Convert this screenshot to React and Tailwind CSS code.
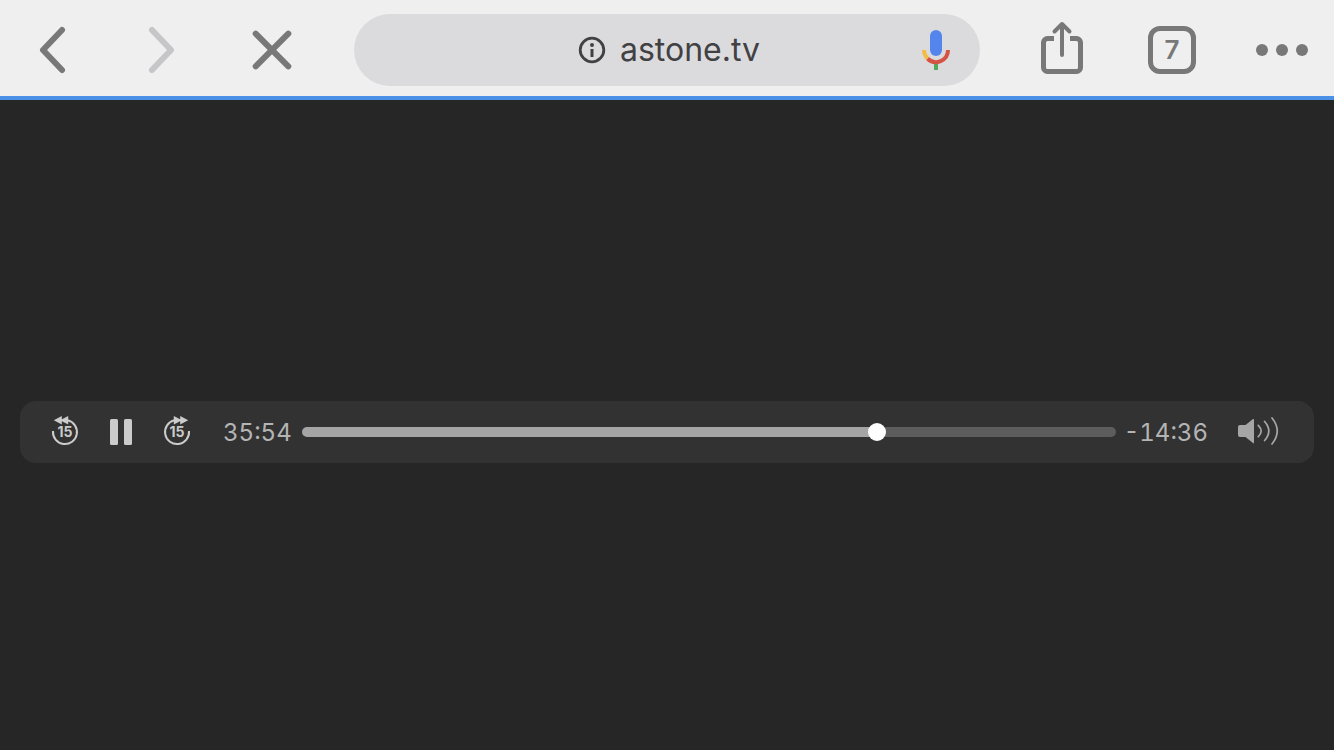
import { useState } from "react";

const POSICION_INICIAL = 35 * 60 + 54;
const DURACION = POSICION_INICIAL + 14 * 60 + 36;

const formatTime = (segundos) => {
  const minutos = Math.floor(segundos / 60);
  return `${minutos}:${String(segundos % 60).padStart(2, "0")}`;
};

function ToolbarIcon({ children }) {
  return (
    <svg
      viewBox="0 0 48 48"
      className="size-12 overflow-visible"
      fill="none"
      stroke="currentColor"
      strokeLinecap="round"
      strokeLinejoin="round"
      strokeWidth="6"
      aria-hidden="true"
    >
      {children}
    </svg>
  );
}

function MicIcon() {
  return (
    <svg viewBox="0 0 28 40" className="h-10 w-7" fill="none" aria-hidden="true">
      <rect x="8" y="0" width="12" height="26" rx="6" fill="#5485ec" />
      <rect x="12" y="33" width="4" height="7" fill="#55a85a" />
      <path d="M26 20A12 12 0 0 1 5.5 28.5" stroke="#d65244" strokeWidth="4" />
      <path d="M2 20A12 12 0 0 0 5.5 28.5" stroke="#f2bd42" strokeWidth="4" />
    </svg>
  );
}

function SkipIcon({ forward }) {
  return (
    <svg viewBox="0 0 32 32" className="size-8" fill="currentColor" aria-hidden="true">
      <g transform={forward ? "translate(32 0) scale(-1 1)" : undefined}>
        <path
          d="M4 15A12 12 0 1 0 18.5 4.3"
          fill="none"
          stroke="currentColor"
          strokeWidth="2"
        />
        <path d="M4.8 4.3L12.8 0V8.6ZM11 4.3L19.2 0V8.6Z" />
      </g>
      <text
        x="16"
        y="21"
        textAnchor="middle"
        className="font-['Inter',sans-serif] text-[14px] font-bold"
      >
        15
      </text>
    </svg>
  );
}

function BrowserToolbar() {
  const [url, setUrl] = useState("astone.tv");

  return (
    <header className="flex h-25 items-center gap-[58px] border-b-4 border-[#4a90e6] bg-[#efefef] px-7 pt-1 text-[#787878]">
      <div className="flex gap-[62px]">
        <button type="button" aria-label="Back">
          <ToolbarIcon>
            <path d="M34 4L15 24L34 44" />
          </ToolbarIcon>
        </button>
        <button type="button" aria-label="Forward" className="text-[#c6c6c8]">
          <ToolbarIcon>
            <path d="M14 4L33 24L14 44" />
          </ToolbarIcon>
        </button>
        <button type="button" aria-label="Stop loading">
          <ToolbarIcon>
            <path d="M7.7 7.7L40.3 40.3M40.3 7.7L7.7 40.3" />
          </ToolbarIcon>
        </button>
      </div>

      <div className="grid h-18 min-w-0 flex-1 grid-cols-[1fr_auto_1fr] items-center rounded-full bg-[#dbdbdd] pr-[30px] pl-[34px]">
        <label className="col-start-2 flex items-center gap-3.5 text-[#414143]">
          <svg
            viewBox="0 0 28 28"
            className="size-7 shrink-0"
            fill="currentColor"
            role="img"
            aria-label="Address"
          >
            <circle cx="14" cy="14" r="11.8" fill="none" stroke="currentColor" strokeWidth="2.8" />
            <circle cx="14" cy="9" r="2" />
            <rect x="12.5" y="13" width="3" height="8" />
          </svg>
          <input
            type="text"
            value={url}
            onChange={(e) => setUrl(e.target.value)}
            className="field-sizing-content bg-transparent text-[32px] leading-10 outline-none"
          />
        </label>
        <button type="button" aria-label="Voice search" className="justify-self-end">
          <MicIcon />
        </button>
      </div>

      <div className="flex gap-[62px]">
        <button type="button" aria-label="Share">
          <ToolbarIcon>
            <path
              d="M16 12.5H9.5a4 4 0 0 0-4 4v25a4 4 0 0 0 4 4h29a4 4 0 0 0 4-4v-25a4 4 0 0 0-4-4H32"
              strokeWidth="5"
              strokeLinecap="butt"
            />
            <path d="M24 29V-2M16.5 5.5L24 -2L31.5 5.5" strokeWidth="4" />
          </ToolbarIcon>
        </button>
        <button
          type="button"
          aria-label="7 open tabs"
          className="flex size-12 items-center justify-center rounded-xl border-5 border-current text-[26px] leading-8 font-semibold"
        >
          7
        </button>
        <button type="button" aria-label="More options">
          <ToolbarIcon>
            <g fill="currentColor" stroke="none">
              <circle cx="4" cy="24" r="6" />
              <circle cx="24" cy="24" r="6" />
              <circle cx="44" cy="24" r="6" />
            </g>
          </ToolbarIcon>
        </button>
      </div>
    </header>
  );
}

function MediaControls() {
  const [posicion, setPosicion] = useState(POSICION_INICIAL);

  const skip = (delta) =>
    setPosicion(Math.min(DURACION, Math.max(0, posicion + delta)));

  return (
    <div className="flex h-[62px] w-full items-center rounded-2xl bg-[#323232] pr-[34px] pl-[17px] text-[#cbcbcb]">
      <button
        type="button"
        aria-label="Back 15 seconds"
        onClick={() => skip(-15)}
        className="flex w-14 justify-center"
      >
        <SkipIcon />
      </button>
      <button type="button" aria-label="Pause" className="flex w-14 justify-center">
        <svg viewBox="0 0 22 26" className="h-[26px] w-[22px]" fill="currentColor" aria-hidden="true">
          <rect x="0" y="0" width="8" height="26" rx="1.5" />
          <rect x="14" y="0" width="8" height="26" rx="1.5" />
        </svg>
      </button>
      <button
        type="button"
        aria-label="Forward 15 seconds"
        onClick={() => skip(15)}
        className="flex w-14 justify-center"
      >
        <SkipIcon forward />
      </button>

      <span className="ml-[18px] pt-0.5 text-2xl text-[#b4b4b4] tabular-nums">
        {formatTime(posicion)}
      </span>
      <input
        type="range"
        aria-label="Playback position"
        min="0"
        max={DURACION}
        value={posicion}
        onChange={(e) => setPosicion(Number(e.target.value))}
        style={{
          "--played": `calc(9px + (100% - 18px) * ${posicion / DURACION})`,
        }}
        className="
          mr-2 ml-2.5 h-[18px] min-w-0 flex-1 appearance-none bg-transparent
          [&::-webkit-slider-runnable-track]:h-2.5
          [&::-webkit-slider-runnable-track]:rounded-full
          [&::-webkit-slider-runnable-track]:bg-[linear-gradient(to_right,#a5a5a5_var(--played),#5d5d5d_var(--played))]
          [&::-webkit-slider-thumb]:-mt-1
          [&::-webkit-slider-thumb]:size-[18px]
          [&::-webkit-slider-thumb]:appearance-none
          [&::-webkit-slider-thumb]:rounded-full
          [&::-webkit-slider-thumb]:bg-white
        "
      />
      <span className="pt-0.5 text-2xl text-[#b4b4b4] tabular-nums">
        -{formatTime(DURACION - posicion)}
      </span>

      <button type="button" aria-label="Mute" className="ml-7 text-[#a6a6a6]">
        <svg viewBox="0 0 44 32" className="h-8 w-11" fill="none" aria-hidden="true">
          <path
            d="M4 9H9.5L17 3Q18 2.5 18 4V26.5Q18 28 17 27L9.5 21H4Q2 21 2 19V11Q2 9 4 9Z"
            fill="currentColor"
          />
          <path
            d="M22.3 9.3Q28 15 22.3 20.7M28.6 5.5Q37 15 28.6 24.5M36 2Q46.5 15 36 28"
            stroke="currentColor"
            strokeWidth="1.7"
            strokeLinecap="round"
          />
        </svg>
      </button>
    </div>
  );
}

export default function App() {
  return (
    <div className="flex min-h-screen flex-col bg-[#262626] font-['Inter',sans-serif]">
      <BrowserToolbar />
      <main className="flex flex-1 items-center px-5 pt-3.5">
        <MediaControls />
      </main>
    </div>
  );
}
